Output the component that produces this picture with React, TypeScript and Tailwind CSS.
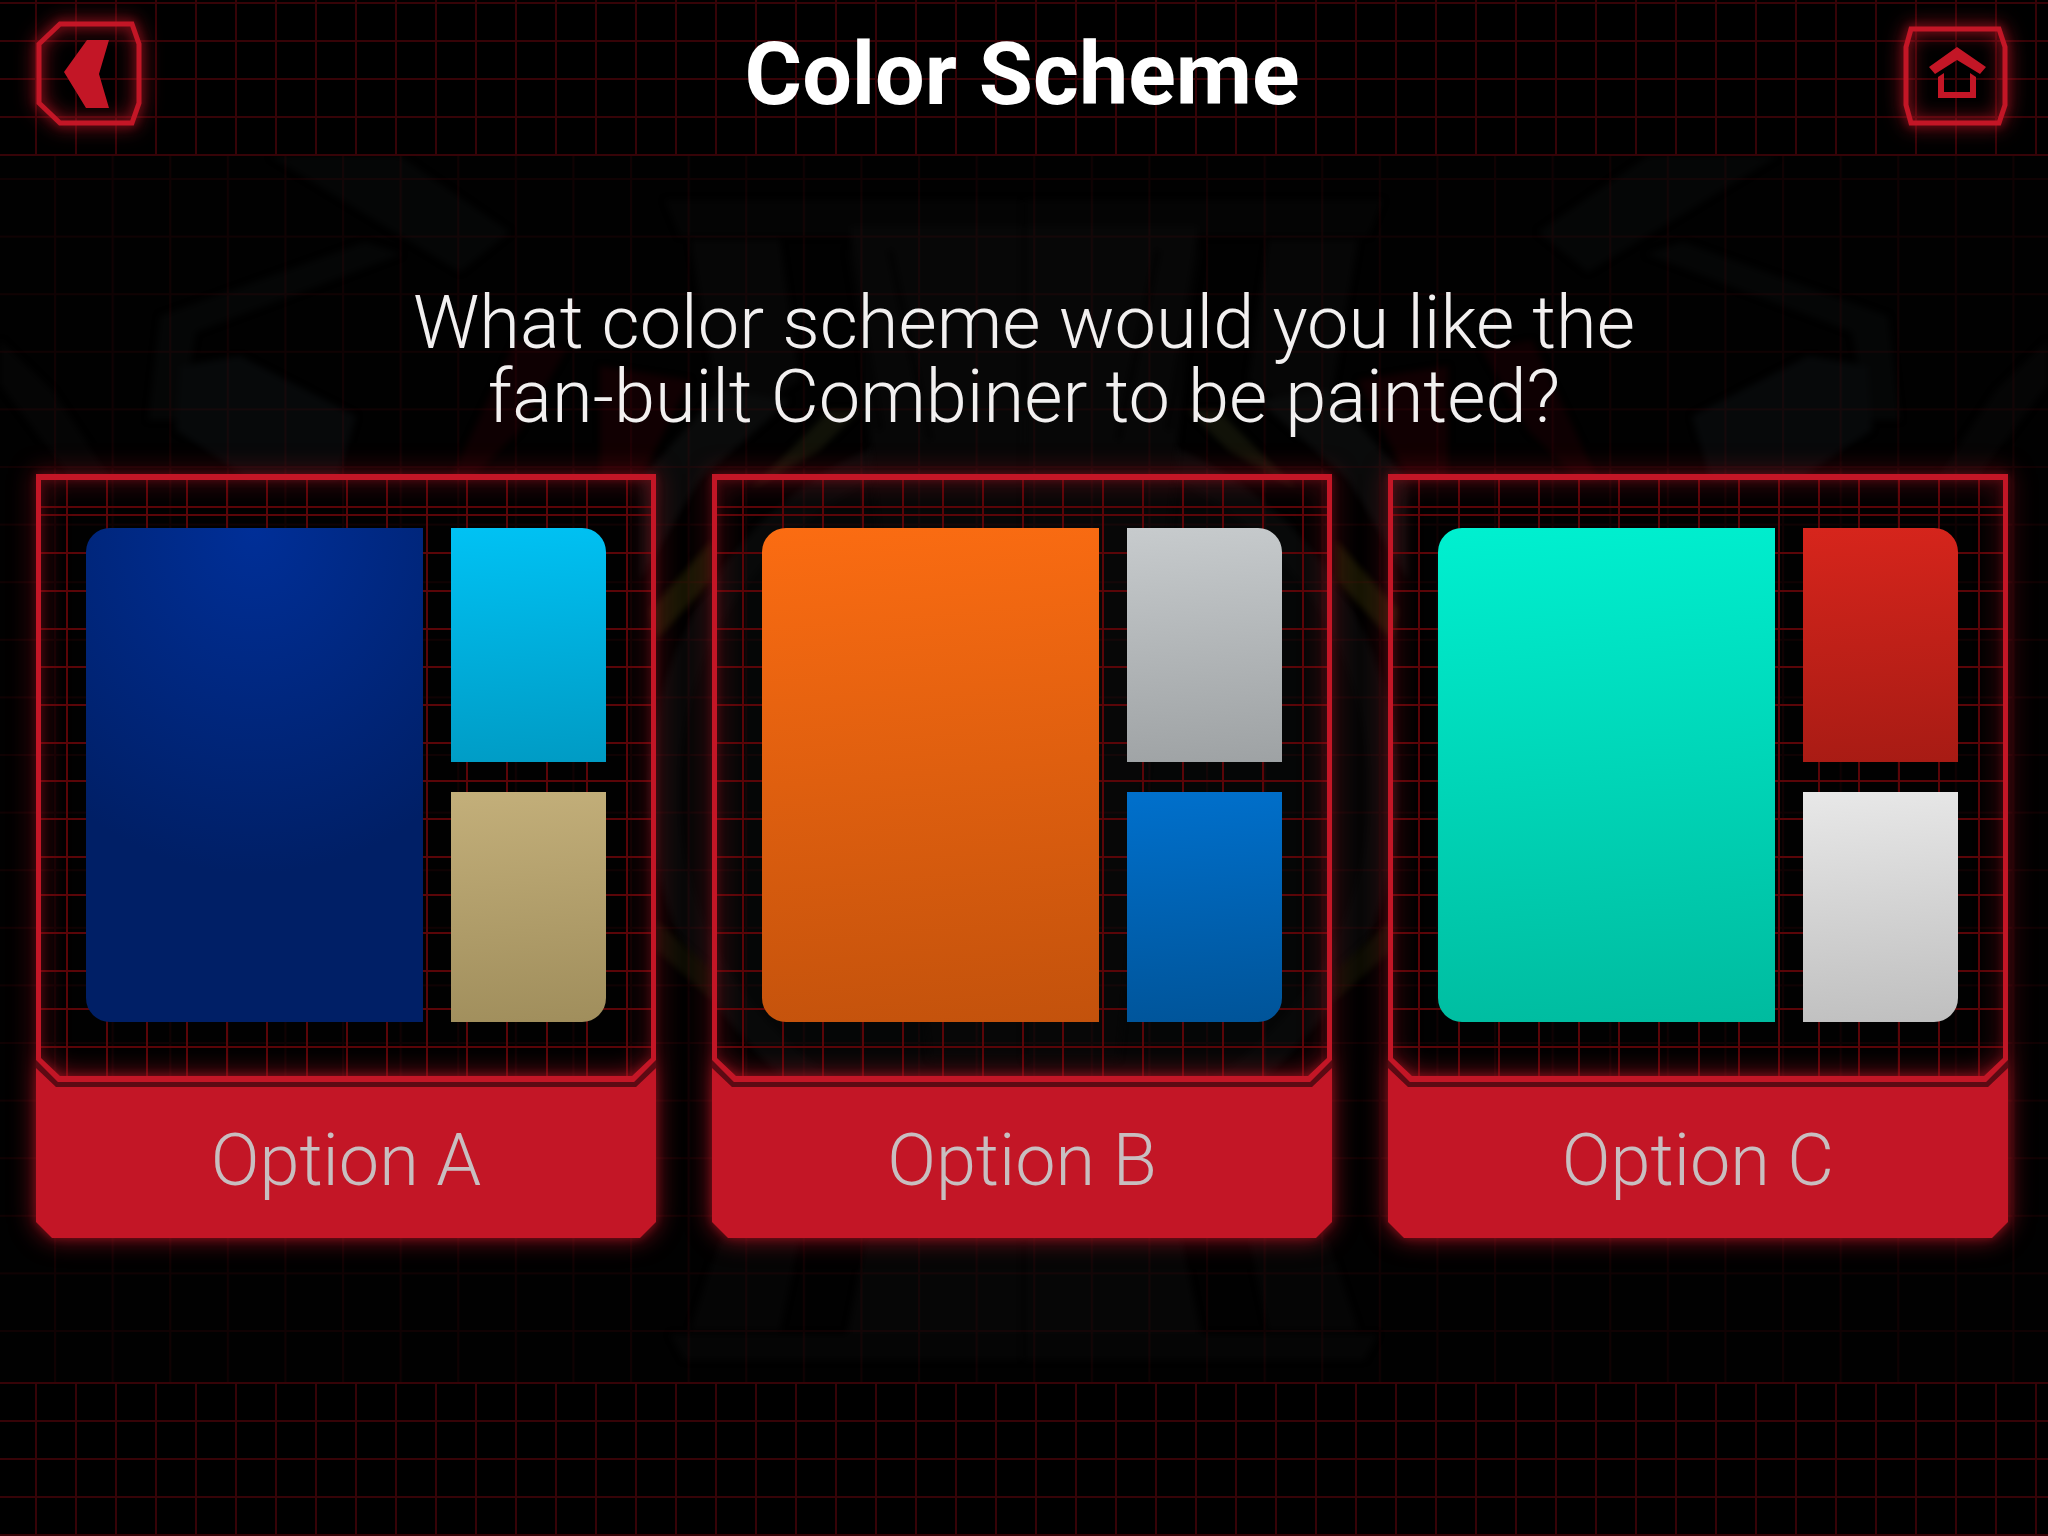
import { clsx } from 'clsx';

interface ColorOption {
  label: string;
  main: string;
  top: string;
  bottom: string;
}

const options: ColorOption[] = [
  {
    label: 'Option A',
    main: 'bg-[radial-gradient(ellipse_90%_70%_at_50%_0%,#002f98,#001f66)]',
    top: 'bg-linear-175 from-[#00c2f4] to-[#009bc4]',
    bottom: 'bg-linear-175 from-[#c3af7a] to-[#a08e5c]',
  },
  {
    label: 'Option B',
    main: 'bg-linear-175 from-[#fb6c12] to-[#c3520c]',
    top: 'bg-linear-175 from-[#c7cbcd] to-[#9ea2a4]',
    bottom: 'bg-linear-175 from-[#0070cc] to-[#005499]',
  },
  {
    label: 'Option C',
    main: 'bg-linear-175 from-[#00f0d0] to-[#00bb9f]',
    top: 'bg-linear-175 from-[#d7251c] to-[#a71b14]',
    bottom: 'bg-linear-175 from-[#e8e8e8] to-[#bfbfbf]',
  },
];

// Grid of thin dark red lines, shared by the header and the footer
const barGrid =
  'bg-[linear-gradient(to_right,#360307_2px,transparent_2px),linear-gradient(to_bottom,#360307_2px,transparent_2px)] bg-size-[40px_38px]';

function BackIcon() {
  return (
    <svg viewBox="36 22 104 104" className="size-26 overflow-visible" aria-hidden="true">
      <path
        d="M60 24H132L139 44V103L132 123H60L39 103V44Z"
        fill="none"
        stroke="#c31626"
        strokeWidth="5"
        className="[filter:drop-shadow(0_0_4px_#c3162680)_drop-shadow(0_0_9px_#c31626)]"
      />
      <path d="M87 40H109L99 74L109 108H86L64 72Z" fill="#c31626" />
    </svg>
  );
}

function HomeIcon() {
  return (
    <svg viewBox="1904 22 104 104" className="size-26 overflow-visible" aria-hidden="true">
      <path
        d="M1911 29H1999L2005 47V105L1999 123H1911L1906 105V47Z"
        fill="none"
        stroke="#c31626"
        strokeWidth="5"
        className="[filter:drop-shadow(0_0_4px_#c3162680)_drop-shadow(0_0_9px_#c31626)]"
      />
      <path d="M1957 47L1986 67L1980 74L1957 60L1935 74L1929 67Z" fill="#c31626" />
      <path d="M1938 77L1944 73V92H1970V73L1976 77V98H1938Z" fill="#c31626" />
    </svg>
  );
}

// Barely visible machine parts; the left half is drawn and mirrored
function Backdrop() {
  return (
    <svg
      viewBox="0 156 2048 1226"
      preserveAspectRatio="xMidYMid slice"
      className="absolute inset-0 size-full"
      aria-hidden="true"
    >
      <defs>
        <pattern id="wires" x="54" y="178" width="57.6" height="57.6" patternUnits="userSpaceOnUse">
          <path d="M0 1H57.6M1 0V57.6" stroke="#6a0810" strokeOpacity="0.14" strokeWidth="2" />
        </pattern>
        <g id="half" className="blur-[3px]">
          <path d="M665 200H1024V236H680Z" fill="#040404" />
          <path d="M690 240H780L800 380L722 430Z" fill="#060606" />
          <path d="M850 226H1024V1060H930Z" fill="#070707" />
          <path d="M890 250L930 440M850 250L880 430" stroke="#030303" strokeWidth="6" />
          <path d="M270 156H400L510 232L460 272Z" fill="#050606" />
          <path d="M365 242L402 254L196 332L180 420H148L160 316Z" fill="#050606" />
          <path d="M180 366L240 356L356 416L338 480H250L176 430Z" fill="#07090a" />
          <path d="M0 340L52 390L112 480H72L0 384Z" fill="#050505" />
          <path d="M516 340L566 350L520 430L470 480H450Z" fill="#0e0002" />
          <path d="M600 366L690 380L640 480H600Z" fill="#110002" />
          <path d="M720 390L790 400L700 480L640 580V480Z" fill="#0a0b0b" />
          <path d="M860 410L820 450L750 490L830 410Z" fill="#111208" />
          <path d="M712 540V580L656 640L650 610Z" fill="#171604" />
          <path d="M656 920L712 970V1000L656 950Z" fill="#0d0e04" />
          <path d="M720 1238H800L780 1330H690Z" fill="#050505" />
          <path d="M866 1238H1024V1340H846Z" fill="#060606" />
          <path d="M670 1334H1024V1360H684Z" fill="#050505" />
        </g>
      </defs>
      <rect y="156" width="2048" height="1226" fill="#010101" />
      <circle cx="1024" cy="790" r="360" fill="#050606" stroke="#080909" strokeWidth="30" className="blur-[3px]" />
      <use href="#half" />
      <use href="#half" transform="matrix(-1 0 0 1 2048 0)" />
      <rect y="156" width="2048" height="1226" fill="url(#wires)" />
    </svg>
  );
}

// Glowing outline, the groove below it and the solid plate for the label
function CardFrame() {
  return (
    <span
      className="absolute inset-0 flex flex-col [filter:drop-shadow(0_0_4px_#c3162666)_drop-shadow(0_0_12px_#c31626b3)]"
      aria-hidden="true"
    >
      <span className="absolute inset-x-0 top-[586px] bottom-3 bg-[#5c0a13] [clip-path:polygon(0_0,22px_22px,calc(100%_-_22px)_22px,100%_0,100%_40px,0_40px)]" />
      <span className="h-[608px] bg-[#c31626] [clip-path:polygon(evenodd,0_0,100%_0,100%_calc(100%_-_22px),calc(100%_-_22px)_100%,22px_100%,0_calc(100%_-_22px),0_0,5px_6px,5px_calc(100%_-_24px),24px_calc(100%_-_6px),calc(100%_-_24px)_calc(100%_-_6px),calc(100%_-_5px)_calc(100%_-_24px),calc(100%_-_5px)_6px,5px_6px)]" />
      <span className="-mt-4 grow bg-[#c31626] [clip-path:polygon(0_2px,20px_21px,calc(100%_-_20px)_21px,100%_2px,100%_calc(100%_-_16px),calc(100%_-_16px)_100%,16px_100%,0_calc(100%_-_16px))]" />
    </span>
  );
}

function OptionCard({ option }: { option: ColorOption }) {
  return (
    <button type="button" className="relative flex flex-col">
      <span
        className={clsx(
          'h-[608px] w-full px-[50px] pt-[54px] pb-[60px]',
          'grid grid-cols-[337fr_155fr] grid-rows-[234fr_230fr] gap-x-7 gap-y-[30px]',
          'bg-[linear-gradient(#5a0508,#5a0508),linear-gradient(to_right,#5a0508_2px,transparent_2px),linear-gradient(to_bottom,#5a0508_2px,transparent_2px)]',
          'bg-size-[100%_2px,40px_100%,100%_38px] bg-position-[0_32px,30px_0,0_40px]',
          '[background-repeat:no-repeat,repeat,repeat]',
          '[clip-path:polygon(0_0,100%_0,100%_calc(100%_-_22px),calc(100%_-_22px)_100%,22px_100%,0_calc(100%_-_22px))]',
        )}
      >
        <span className={clsx('row-span-2 rounded-l-3xl', option.main)} />
        <span className={clsx('rounded-tr-3xl', option.top)} />
        <span className={clsx('rounded-br-3xl', option.bottom)} />
      </span>
      <CardFrame />
      <span className="relative w-full h-[156px] pt-0.5 flex items-center justify-center text-[72px] leading-none font-light text-[#c8bec0]">
        {option.label}
      </span>
    </button>
  );
}

export default function App() {
  return (
    <div className="min-h-screen flex flex-col bg-black text-white font-[Roboto,sans-serif]">
      <header className={clsx('h-[156px] pl-9 pr-10 pb-2 flex items-center justify-between bg-position-[35px_2px]', barGrid)}>
        <button type="button" aria-label="Back">
          <BackIcon />
        </button>
        <h1 className="text-[88px] leading-none font-bold">Color Scheme</h1>
        <button type="button" aria-label="Home">
          <HomeIcon />
        </button>
      </header>

      <main className="relative pt-[130px] pb-36">
        <Backdrop />
        <p className="relative text-[74px] leading-[74px] font-light text-center text-[#f2f0f0]">
          What color scheme would you like the
          <br />
          fan-built Combiner to be painted?
        </p>
        <div className="relative mt-10 pl-9 pr-10 grid grid-cols-3 gap-14">
          {options.map((option) => (
            <OptionCard key={option.label} option={option} />
          ))}
        </div>
      </main>

      <footer className={clsx('min-h-[154px] grow bg-position-[35px_0px]', barGrid)} />
    </div>
  );
}
